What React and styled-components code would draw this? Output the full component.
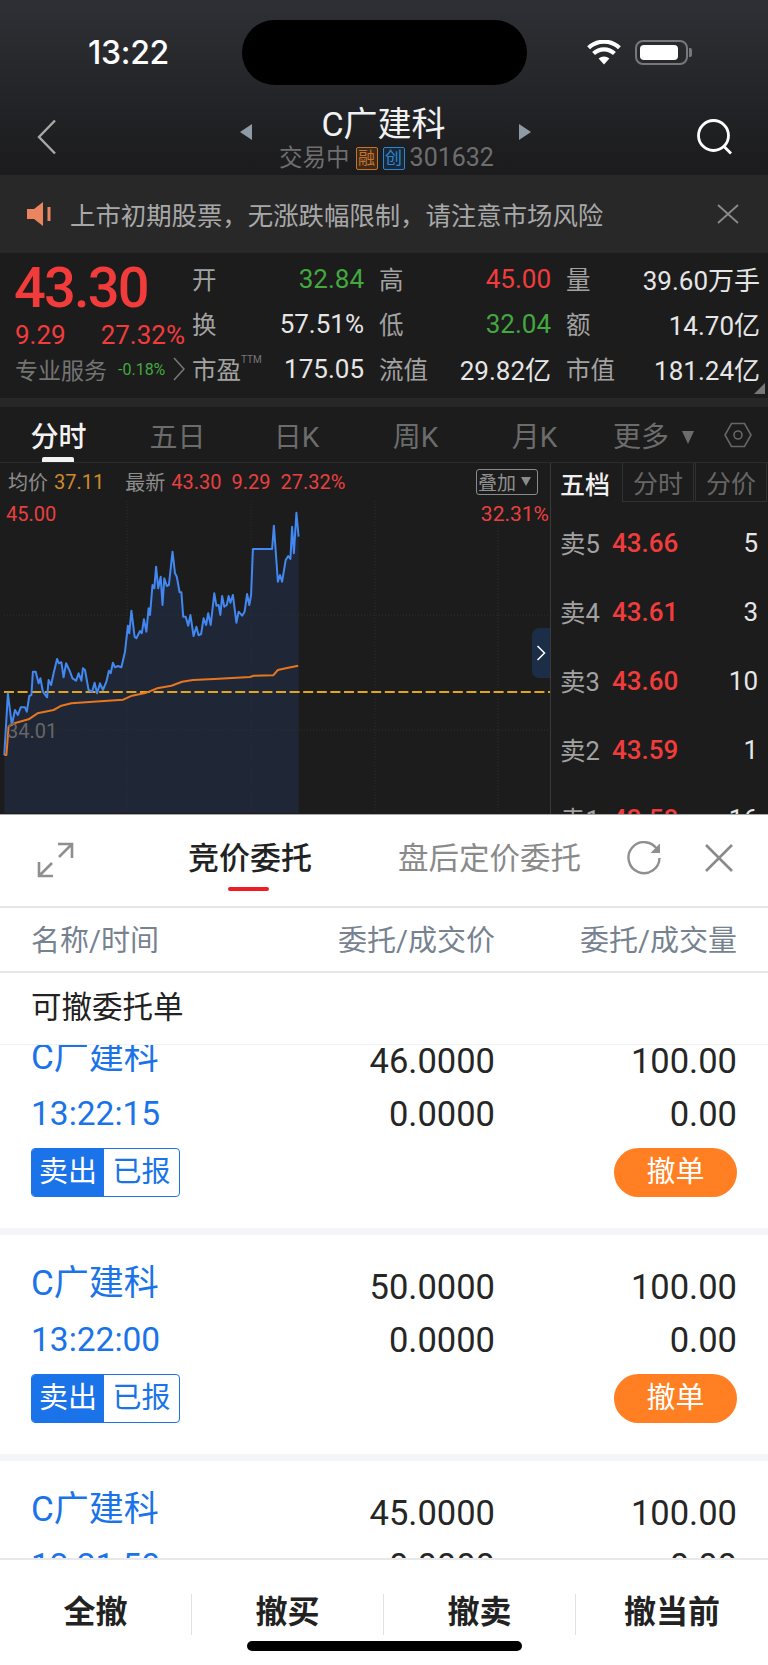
import React from 'react';
import styled, { createGlobalStyle } from 'styled-components';

const GlobalStyle = createGlobalStyle`
    html, body {
        margin: 0;
        padding: 0;
        width: 768px;
        height: 1665px;
        overflow: hidden;
        background: #fff;
        font-family: Roboto, "Noto Sans CJK SC", sans-serif;
    }
    * { box-sizing: border-box; }
`;

const RED = '#f23c3c';
const GREEN = '#43a83f';
const BLUE = '#1a73e8';

// traced from the reference chart, in zoomed-crop coordinates
const pricePts = [[12,885],[22,700],[33,795],[42,750],[50,765],[58,742],[70,742],[75,755],[82,708],[88,705],[92,635],[100,635],[108,670],[113,655],[120,695],[132,712],[136,660],[143,675],[150,640],[160,597],[165,610],[172,607],[178,652],[185,610],[195,632],[203,655],[213,662],[220,640],[228,662],[232,625],[238,630],[248,690],[258,695],[265,668],[272,700],[280,670],[288,690],[298,665],[305,632],[310,640],[316,608],[322,622],[330,618],[340,622],[350,575],[358,497],[362,520],[368,452],[377,530],[382,535],[392,513],[397,520],[403,478],[410,515],[416,445],[420,465],[427,375],[432,385],[437,320],[443,385],[450,350],[455,435],[460,355],[467,378],[473,375],[483,275],[490,340],[495,350],[503,397],[508,397],[513,470],[520,470],[527,497],[533,465],[542,528],[550,500],[556,526],[563,522],[570,475],[577,495],[583,460],[590,495],[600,400],[606,437],[612,435],[617,465],[622,408],[628,440],[635,435],[640,408],[645,428],[652,405],[662,488],[668,455],[678,467],[685,455],[692,402],[698,435],[703,405],[708,267],[762,267],[767,197],[778,365],[784,345],[790,365],[800,300],[807,288],[813,297],[818,200],[823,280],[830,158],[836,230]];
const avgPts = [[12,885],[18,885],[24,800],[40,790],[80,778],[105,760],[150,750],[172,737],[200,730],[260,725],[345,719],[370,707],[410,698],[440,685],[480,677],[510,665],[540,660],[600,657],[700,651],[710,647],[765,646],[778,630],[800,625],[835,617]];
const toLine = (pts) => pts.map(([x, y]) => `${(x / 2.8).toFixed(1)},${(y / 3 - 41).toFixed(1)}`).join(' ');

const stats = [
    [{ label: '开', value: '32.84', color: GREEN }, { label: '高', value: '45.00', color: RED }, { label: '量', value: '39.60万手' }],
    [{ label: '换', value: '57.51%' }, { label: '低', value: '32.04', color: GREEN }, { label: '额', value: '14.70亿' }],
    [{ label: '市盈', sup: 'TTM', value: '175.05' }, { label: '流值', value: '29.82亿' }, { label: '市值', value: '181.24亿' }],
];

const levels = [
    { name: '卖5', price: '43.66', qty: '5' },
    { name: '卖4', price: '43.61', qty: '3' },
    { name: '卖3', price: '43.60', qty: '10' },
    { name: '卖2', price: '43.59', qty: '1' },
    { name: '卖1', price: '43.58', qty: '16' },
];

const orders = [
    { price: '46.0000', time: '13:22:15' },
    { price: '50.0000', time: '13:22:00' },
    { price: '45.0000', time: '13:21:50' },
];

export default function App() {
    return (
        <Screen>
            <GlobalStyle />
            <Dark>
                <Header>
                    <StatusBar>
                        <Clock>13:22</Clock>
                        <Island />
                        <WifiIcon width="34" height="25" viewBox="0 0 34 25">
                            <path d="M17 24.5 L11.6 18.6 A8 8 0 0 1 22.4 18.6 Z" fill="#fff" />
                            <path d="M6.6 13.6 A15 15 0 0 1 27.4 13.6" fill="none" stroke="#fff" strokeWidth="4.2" />
                            <path d="M1.6 7.8 A22.5 22.5 0 0 1 32.4 7.8" fill="none" stroke="#fff" strokeWidth="4.2" />
                        </WifiIcon>
                        <Battery><BatteryFill /></Battery>
                        <BatteryCap />
                    </StatusBar>
                    <Nav>
                        <NavSide>
                            <svg width="20" height="36" viewBox="0 0 20 36">
                                <path d="M18 1.5 L2 18 L18 34.5" fill="none" stroke="#a8a8a8" strokeWidth="2.4" />
                            </svg>
                        </NavSide>
                        <NavMiddle>
                            <Arrow $dir="left" />
                            <NavTitleBox>
                                <NavTitle>C广建科</NavTitle>
                                <NavSub>
                                    交易中
                                    <Badge $color="#c4742a" $bg="#3d2a1a">融</Badge>
                                    <Badge $color="#2f86cc" $bg="#17283a">创</Badge>
                                    <NavCode>301632</NavCode>
                                </NavSub>
                            </NavTitleBox>
                            <Arrow $dir="right" />
                        </NavMiddle>
                        <NavSide $right>
                            <svg width="37" height="36" viewBox="0 0 37 36">
                                <circle cx="17.5" cy="16.5" r="15" fill="none" stroke="#fff" strokeWidth="2.8" />
                                <path d="M28 27.5 L35 34.5" stroke="#fff" strokeWidth="2.8" />
                            </svg>
                        </NavSide>
                    </Nav>
                </Header>

                <Notice>
                    <svg width="24" height="24" viewBox="0 0 24 24">
                        <path d="M0 7 H7 L16 0 V24 L7 17 H0 Z" fill="#ea8560" />
                        <rect x="20.5" y="5" width="3" height="14" fill="#ea8560" />
                    </svg>
                    <NoticeText>上市初期股票，无涨跌幅限制，请注意市场风险</NoticeText>
                    <svg width="22" height="20" viewBox="0 0 22 20">
                        <path d="M1 1 L21 19 M21 1 L1 19" stroke="#8a8a8a" strokeWidth="1.8" />
                    </svg>
                </Notice>

                <Quote>
                    <QuoteLeft>
                        <BigPrice>43.30</BigPrice>
                        <ChangeRow><span>9.29</span><span>27.32%</span></ChangeRow>
                        <ProRow>
                            <ProLabel>专业服务</ProLabel>
                            <ProPct>-0.18%</ProPct>
                            <svg width="12" height="24" viewBox="0 0 12 24">
                                <path d="M1 1 L11 12 L1 23" fill="none" stroke="#777" strokeWidth="1.6" />
                            </svg>
                        </ProRow>
                    </QuoteLeft>
                    <StatGrid>
                        {stats.flat().map((s) => (
                            <Stat key={s.label}>
                                <StatLabel>{s.label}{s.sup && <StatSup>{s.sup}</StatSup>}</StatLabel>
                                <StatValue $color={s.color}>{s.value}</StatValue>
                            </Stat>
                        ))}
                    </StatGrid>
                    <CornerMark />
                </Quote>

                <ChartTabs>
                    <ChartTab $active>分时</ChartTab>
                    <ChartTab>五日</ChartTab>
                    <ChartTab>日K</ChartTab>
                    <ChartTab>周K</ChartTab>
                    <ChartTab>月K</ChartTab>
                    <ChartTab>更多<MoreCaret /></ChartTab>
                    <HexIcon width="28" height="28" viewBox="0 0 28 28">
                        <path d="M7.5 2.5 H20.5 L27 14 L20.5 25.5 H7.5 L1 14 Z" fill="none" stroke="#666" strokeWidth="1.6" />
                        <circle cx="14" cy="14" r="4" fill="none" stroke="#666" strokeWidth="1.6" />
                    </HexIcon>
                </ChartTabs>

                <ChartArea>
                    <ChartColumn>
                        <InfoRow>
                            <InfoLabel>均价</InfoLabel>
                            <InfoValue $color="#cf8a2e">37.11</InfoValue>
                            <InfoLabel $gap>最新</InfoLabel>
                            <InfoValue $color="#e84040">43.30</InfoValue>
                            <InfoValue $color="#e84040" $wide>9.29</InfoValue>
                            <InfoValue $color="#e84040" $wide>27.32%</InfoValue>
                            <OverlayBtn>叠加<OverlayCaret /></OverlayBtn>
                        </InfoRow>
                        <Canvas>
                            <svg width="551" height="312" viewBox="0 0 551 312">
                                <polygon points={`${toLine(pricePts)} 298.6,312 4.3,312`} fill="#1f2736" />
                                {[127, 251, 375, 498].map((x) => (
                                    <line key={x} x1={x} x2={x} y1="0" y2="312" stroke="#2e2e2e" strokeDasharray="1 2" />
                                ))}
                                {[114, 229].map((y) => (
                                    <line key={y} x1="4" x2="550" y1={y} y2={y} stroke="#2e2e2e" strokeDasharray="1 2" />
                                ))}
                                <line x1="4" x2="551" y1="191" y2="191" stroke="#e2a51e" strokeWidth="2" strokeDasharray="10 3.6" />
                                <polyline points={toLine(pricePts)} fill="none" stroke="#4288f0" strokeWidth="2" strokeLinejoin="round" />
                                <polyline points={toLine(avgPts)} fill="none" stroke="#e8761e" strokeWidth="2" strokeLinejoin="round" />
                            </svg>
                            <TopLeftLabel>45.00</TopLeftLabel>
                            <TopRightLabel>32.31%</TopRightLabel>
                            <LowLabel>34.01</LowLabel>
                            <SideHandle>
                                <svg width="10" height="16" viewBox="0 0 10 16">
                                    <path d="M1.5 1 L8.5 8 L1.5 15" fill="none" stroke="#fff" strokeWidth="1.5" />
                                </svg>
                            </SideHandle>
                        </Canvas>
                    </ChartColumn>
                    <BookColumn>
                        <BookTabs>
                            <BookTab $active>五档</BookTab>
                            <BookTab>分时</BookTab>
                            <BookTab>分价</BookTab>
                        </BookTabs>
                        <BookRows>
                            {levels.map((l) => (
                                <BookRow key={l.name}>
                                    <BookName>{l.name}</BookName>
                                    <BookPrice>{l.price}</BookPrice>
                                    <BookQty>{l.qty}</BookQty>
                                </BookRow>
                            ))}
                        </BookRows>
                    </BookColumn>
                </ChartArea>
            </Dark>

            <Sheet>
                <SheetHeader>
                    <ExpandIcon width="37" height="36" viewBox="0 0 37 36">
                        <path d="M21 2 H35 V16 M35 2 L22 15" fill="none" stroke="#8f8f8f" strokeWidth="2.6" />
                        <path d="M2 20 V34 H16 M2 34 L15 21" fill="none" stroke="#8f8f8f" strokeWidth="2.6" />
                    </ExpandIcon>
                    <SheetTab $active>竞价委托</SheetTab>
                    <SheetTab>盘后定价委托</SheetTab>
                    <RefreshIcon width="36" height="34" viewBox="0 0 36 34">
                        <path d="M31.5 9 A15.5 15.5 0 1 0 33.5 17" fill="none" stroke="#8f8f8f" strokeWidth="2.4" />
                        <path d="M34 2.5 V12 H24.5 Z" fill="#8f8f8f" />
                    </RefreshIcon>
                    <CloseIcon width="30" height="28" viewBox="0 0 30 28">
                        <path d="M2 1 L28 27 M28 1 L2 27" stroke="#8a8a8a" strokeWidth="2.6" />
                    </CloseIcon>
                </SheetHeader>
                <ColumnHead>
                    <span>名称/时间</span>
                    <span>委托/成交价</span>
                    <span>委托/成交量</span>
                </ColumnHead>
                <SectionTitle>可撤委托单</SectionTitle>
                <List>
                    <ListInner>
                        {orders.map((o) => (
                            <Card key={o.time}>
                                <NameCell>C广建科</NameCell>
                                <NumCell>{o.price}</NumCell>
                                <NumCell>100.00</NumCell>
                                <TimeCell>{o.time}</TimeCell>
                                <NumCell>0.0000</NumCell>
                                <NumCell>0.00</NumCell>
                                <TagBox><TagSide>卖出</TagSide><TagState>已报</TagState></TagBox>
                                <span />
                                <CancelBtn>撤单</CancelBtn>
                            </Card>
                        ))}
                    </ListInner>
                </List>
                <Footer>
                    <FooterBtns>
                        <FooterBtn>全撤</FooterBtn>
                        <FooterBtn>撤买</FooterBtn>
                        <FooterBtn>撤卖</FooterBtn>
                        <FooterBtn>撤当前</FooterBtn>
                    </FooterBtns>
                    <HomeBar />
                </Footer>
            </Sheet>
        </Screen>
    );
}

const Screen = styled.div`
    width: 768px;
    height: 1665px;
    display: flex;
    flex-direction: column;
    overflow: hidden;
`;

const Dark = styled.div`
    height: 814px;
    flex: none;
    overflow: hidden;
    background: #272727;
`;

const Header = styled.div`
    height: 175px;
    background: linear-gradient(#2e3035, #1b1b1d);
`;

const StatusBar = styled.div`
    height: 104px;
    display: flex;
    align-items: center;
`;

const Clock = styled.div`
    margin-left: 88px;
    width: 83px;
    font-family: Inter, sans-serif;
    font-size: 32px;
    font-weight: 500;
    letter-spacing: -0.3px;
    color: #fff;
    white-space: nowrap;
`;

const Island = styled.div`
    margin-left: 71px;
    width: 285px;
    height: 65px;
    border-radius: 33px;
    background: #000;
`;

const WifiIcon = styled.svg`
    margin-left: 60px;
`;

const Battery = styled.div`
    margin-left: 14px;
    width: 53px;
    height: 25px;
    padding: 3px;
    border: 2px solid #77787b;
    border-radius: 8px;
`;

const BatteryFill = styled.div`
    width: 38px;
    height: 100%;
    border-radius: 4px;
    background: #fff;
`;

const BatteryCap = styled.div`
    margin-left: 1px;
    width: 3px;
    height: 9px;
    border-radius: 0 2px 2px 0;
    background: #77787b;
`;

const Nav = styled.div`
    height: 71px;
    padding: 0 35px 0 37px;
    display: flex;
    align-items: flex-start;
    justify-content: space-between;
`;

const NavSide = styled.div`
    width: 40px;
    margin-top: 15px;
    display: flex;
    justify-content: ${(p) => (p.$right ? 'flex-end' : 'flex-start')};
`;

const NavMiddle = styled.div`
    display: flex;
    align-items: flex-start;
`;

const Arrow = styled.div`
    width: 0;
    height: 0;
    margin: 20px 0 0;
    border-top: 8.5px solid transparent;
    border-bottom: 8.5px solid transparent;
    ${(p) => (p.$dir === 'left'
        ? 'border-right: 12px solid #8e9aa6; margin-right: 29px;'
        : 'border-left: 12px solid #8e9aa6; margin-left: 24px;')}
`;

const NavTitleBox = styled.div`
    width: 214px;
    display: flex;
    flex-direction: column;
    align-items: center;
`;

const NavTitle = styled.div`
    height: 41px;
    margin-right: 8px;
    line-height: 41px;
    font-size: 34px;
    color: #f2f2f2;
    white-space: nowrap;
`;

const NavSub = styled.div`
    height: 26px;
    line-height: 26px;
    margin-right: 2px;
    font-size: 23.5px;
    color: #6e6e6e;
    display: flex;
    align-items: center;
    white-space: nowrap;
`;

const NavCode = styled.span`
    font-size: 25px;
`;

const Badge = styled.span`
    width: 22px;
    height: 23px;
    margin: 0 5px 0 0;
    &:first-of-type { margin-left: 6px; }
    border: 1px solid ${(p) => p.$color};
    border-radius: 2px;
    background: ${(p) => p.$bg};
    color: ${(p) => p.$color};
    font-size: 17px;
    line-height: 21px;
    text-align: center;
`;

const Notice = styled.div`
    height: 77px;
    padding: 0 29px 0 27px;
    background: #282828;
    display: flex;
    align-items: center;
`;

const NoticeText = styled.div`
    flex: 1;
    margin-left: 19px;
    font-size: 25.4px;
    color: #a8a8a8;
    white-space: nowrap;
`;

const Quote = styled.div`
    position: relative;
    height: 145px;
    margin-top: 1px;
    padding: 6px 8px 0 16px;
    background: #1c1c1c;
    display: flex;
`;

const QuoteLeft = styled.div`
    width: 177px;
    flex: none;
`;

const BigPrice = styled.div`
    height: 56px;
    margin-left: -2px;
    line-height: 58px;
    font-size: 56px;
    font-weight: 500;
    letter-spacing: -1.8px;
    color: ${RED};
`;

const ChangeRow = styled.div`
    width: 170px;
    height: 36px;
    margin: 2px 0 0 -1px;
    line-height: 36px;
    display: flex;
    justify-content: space-between;
    font-size: 26px;
    color: ${RED};
`;

const ProRow = styled.div`
    height: 36px;
    margin: -2px 0 0 -1px;
    display: flex;
    align-items: center;
`;

const ProLabel = styled.span`
    font-size: 23px;
    color: #747474;
    white-space: nowrap;
`;

const ProPct = styled.span`
    margin: 0 8px 0 11px;
    font-size: 16px;
    color: ${GREEN};
`;

const StatGrid = styled.div`
    flex: 1;
    margin: -3px 0 0 -1px;
    display: grid;
    grid-template-columns: 172px 172px 194px;
    grid-auto-rows: 45px;
    column-gap: 15px;
`;

const Stat = styled.div`
    display: flex;
    align-items: center;
    justify-content: space-between;
`;

const StatLabel = styled.span`
    font-size: 24.5px;
    color: #a2a2a2;
    white-space: nowrap;
    display: flex;
`;

const StatSup = styled.span`
    font-size: 10px;
    color: #777;
    line-height: 18px;
`;

const StatValue = styled.span`
    font-size: 26px;
    color: ${(p) => p.$color || '#e6e6e6'};
    white-space: nowrap;
`;

const CornerMark = styled.div`
    position: absolute;
    right: 3px;
    bottom: 4px;
    width: 0;
    height: 0;
    border-left: 11px solid transparent;
    border-bottom: 11px solid #777;
`;

const ChartTabs = styled.div`
    height: 56px;
    margin-top: 9px;
    background: #1c1c1c;
    border-bottom: 1px solid #2c2c2c;
    display: grid;
    grid-template-columns: repeat(6, 119px) auto;
    align-items: center;
`;

const ChartTab = styled.div`
    position: relative;
    height: 100%;
    margin-left: -2px;
    display: flex;
    align-items: center;
    justify-content: center;
    font-size: 28px;
    font-weight: ${(p) => (p.$active ? 500 : 400)};
    color: ${(p) => (p.$active ? '#f2f2f2' : '#6c6c6c')};
    ${(p) => p.$active && `
        &::after {
            content: '';
            position: absolute;
            left: 44px;
            bottom: 0;
            width: 32px;
            height: 5px;
            border-radius: 2px 2px 0 0;
            background: #f2f2f2;
        }
    `}
`;

const MoreCaret = styled.span`
    margin: 5px 0 0 13px;
    border-left: 6px solid transparent;
    border-right: 6px solid transparent;
    border-top: 13px solid #6c6c6c;
`;

const HexIcon = styled.svg`
    margin-left: 10px;
`;

const ChartArea = styled.div`
    height: 352px;
    background: #1c1c1c;
    display: flex;
`;

const ChartColumn = styled.div`
    width: 551px;
    flex: none;
    border-right: 1px solid #3a3a3a;
    display: flex;
    flex-direction: column;
`;

const InfoRow = styled.div`
    height: 39px;
    margin-top: -1px;
    padding: 0 12px 0 8px;
    display: flex;
    align-items: center;
    font-size: 20px;
    white-space: nowrap;
`;

const InfoLabel = styled.span`
    color: #8c8c8c;
    margin-left: ${(p) => (p.$gap ? '21px' : '0')};
`;

const InfoValue = styled.span`
    color: ${(p) => p.$color};
    margin-left: ${(p) => (p.$wide ? '10px' : '6px')};
`;

const OverlayBtn = styled.div`
    margin-left: auto;
    width: 62px;
    height: 26px;
    border: 1px solid #8a8a8a;
    border-radius: 3px;
    display: flex;
    align-items: center;
    padding-left: 1px;
    font-size: 19px;
    color: #909090;
`;

const OverlayCaret = styled.span`
    margin-left: 5px;
    border-left: 5px solid transparent;
    border-right: 5px solid transparent;
    border-top: 9px solid #8a8a8a;
`;

const Canvas = styled.div`
    position: relative;
    flex: 1;
    overflow: hidden;
    svg { display: block; }
`;

const TopLeftLabel = styled.span`
    position: absolute;
    left: 6px;
    top: 1px;
    font-size: 20px;
    color: #e84040;
`;

const TopRightLabel = styled.span`
    position: absolute;
    right: 1px;
    top: 1px;
    font-size: 21px;
    color: #e84040;
`;

const LowLabel = styled.span`
    position: absolute;
    left: 7px;
    top: 218px;
    font-size: 20px;
    color: #666;
`;

const SideHandle = styled.div`
    position: absolute;
    right: 0;
    top: 127px;
    width: 18px;
    height: 50px;
    border-radius: 7px 0 0 7px;
    background: #1b2d47;
    display: flex;
    align-items: center;
    justify-content: center;
`;

const BookColumn = styled.div`
    flex: 1;
    display: flex;
    flex-direction: column;
`;

const BookTabs = styled.div`
    height: 39px;
    flex: none;
    display: grid;
    grid-template-columns: 70px 72px 72px;
    column-gap: 1px;
`;

const BookTab = styled.div`
    display: flex;
    align-items: center;
    justify-content: ${(p) => (p.$active ? 'flex-start' : 'center')};
    padding-left: ${(p) => (p.$active ? '9px' : '0')};
    font-size: 25px;
    font-weight: ${(p) => (p.$active ? 500 : 400)};
    color: ${(p) => (p.$active ? '#f0f0f0' : '#666')};
    border: ${(p) => (p.$active ? 'none' : '1px solid #313131')};
    border-top: none;
`;

const BookRows = styled.div`
    padding-top: 6px;
`;

const BookRow = styled.div`
    height: 69px;
    padding: 0 10px 0 9px;
    display: flex;
    align-items: center;
`;

const BookName = styled.span`
    width: 52px;
    margin-bottom: 3px;
    font-size: 25.5px;
    white-space: nowrap;
    color: #a2a2a2;
`;

const BookPrice = styled.span`
    font-size: 26px;
    font-weight: 500;
    color: ${RED};
`;

const BookQty = styled.span`
    margin-left: auto;
    font-size: 26px;
    color: #e6e6e6;
`;

const Sheet = styled.div`
    flex: 1;
    min-height: 0;
    background: #fff;
    border-top: 1px solid #a9a9a9;
    display: flex;
    flex-direction: column;
`;

const SheetHeader = styled.div`
    height: 93px;
    flex: none;
    border-bottom: 2px solid #e6e6e6;
    display: flex;
    align-items: center;
`;

const ExpandIcon = styled.svg`
    margin-left: 37px;
    margin-bottom: 2px;
`;

const SheetTab = styled.div`
    position: relative;
    margin-left: ${(p) => (p.$active ? '114px' : '86px')};
    margin-bottom: 10px;
    font-size: ${(p) => (p.$active ? '31px' : '30.5px')};
    font-weight: ${(p) => (p.$active ? 500 : 400)};
    color: ${(p) => (p.$active ? '#222' : '#8a8a8a')};
    white-space: nowrap;
    ${(p) => p.$active && `
        &::after {
            content: '';
            position: absolute;
            left: 40px;
            bottom: -13px;
            width: 41px;
            height: 4px;
            border-radius: 2px;
            background: #ee1c25;
        }
    `}
`;

const RefreshIcon = styled.svg`
    margin-left: 45px;
    margin-bottom: 5px;
`;

const CloseIcon = styled.svg`
    margin-left: 42px;
    margin-bottom: 5px;
`;

const ColumnHead = styled.div`
    height: 65px;
    flex: none;
    padding: 0 31px 4px 31px;
    border-bottom: 2px solid #e6e6e6;
    display: grid;
    grid-template-columns: 1fr 200px 242px;
    align-items: center;
    font-size: 29px;
    color: #778290;
    white-space: nowrap;
    span + span { text-align: right; }
`;

const SectionTitle = styled.div`
    height: 72px;
    flex: none;
    padding: 0 31px 7px;
    border-bottom: 1px solid #f1f1f1;
    display: flex;
    align-items: center;
    font-size: 30.5px;
    color: #222;
`;

const List = styled.div`
    flex: 1;
    min-height: 0;
    overflow: hidden;
`;

// scrolled state: first card sits partly under the section title
const ListInner = styled.div`
    margin-top: -36px;
`;

const Card = styled.div`
    height: 226px;
    padding: 24px 31px 0 31px;
    border-bottom: 7px solid #f4f5f8;
    display: grid;
    grid-template-columns: 1fr 200px 242px;
    grid-template-rows: 55px 51px 53px;
    align-items: center;
`;

const NameCell = styled.div`
    margin-bottom: 14px;
    font-size: 35px;
    color: ${BLUE};
    white-space: nowrap;
`;

const TimeCell = styled.div`
    font-size: 33.5px;
    color: ${BLUE};
    white-space: nowrap;
`;

const NumCell = styled.div`
    font-size: 34.5px;
    color: #262626;
    text-align: right;
`;

const TagBox = styled.div`
    width: 149px;
    height: 49px;
    margin-top: 14px;
    border: 1.5px solid ${BLUE};
    border-radius: 4px;
    overflow: hidden;
    display: flex;
    font-size: 29px;
`;

const TagSide = styled.div`
    width: 72px;
    background: ${BLUE};
    color: #fff;
    text-align: center;
    line-height: 46px;
`;

const TagState = styled.div`
    flex: 1;
    color: ${BLUE};
    text-align: center;
    line-height: 46px;
`;

const CancelBtn = styled.div`
    justify-self: end;
    width: 123px;
    height: 49px;
    margin-top: 14px;
    border-radius: 25px;
    background: #ff7f22;
    color: #fff;
    font-size: 29px;
    line-height: 49px;
    text-align: center;
`;

const Footer = styled.div`
    height: 107px;
    flex: none;
    background: #fff;
    border-top: 2px solid #e8e8e8;
    padding-top: 34px;
`;

const FooterBtns = styled.div`
    display: grid;
    grid-template-columns: repeat(4, 192px);
`;

const FooterBtn = styled.div`
    height: 41px;
    padding-bottom: 11px;
    display: flex;
    align-items: center;
    justify-content: center;
    font-size: 32px;
    font-weight: 700;
    color: #222;
    &:not(:last-child) { border-right: 1px solid #e2e2e2; }
`;

const HomeBar = styled.div`
    width: 275px;
    height: 10px;
    margin: 6px auto 0;
    border-radius: 5px;
    background: #000;
`;
